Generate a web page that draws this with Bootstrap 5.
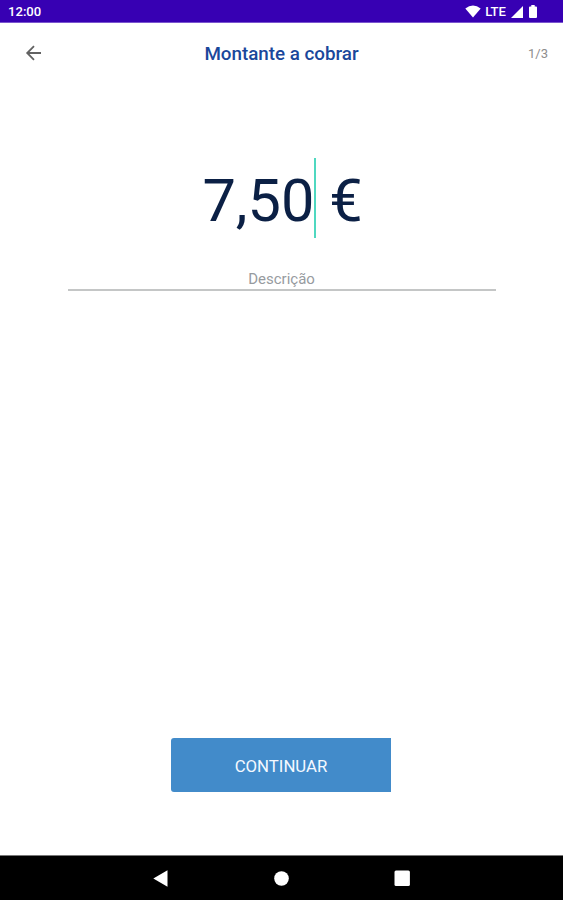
<!DOCTYPE html>
<html lang="pt">
<head>
<meta charset="utf-8">
<meta name="viewport" content="width=device-width, initial-scale=1">
<title>Montante a cobrar</title>
<link href="https://cdn.jsdelivr.net/npm/bootstrap@5.3.0/dist/css/bootstrap.min.css" rel="stylesheet">
<style>
body{font-family:Roboto,"Liberation Sans",sans-serif;height:900px;overflow:hidden}
svg{display:block}
.status{height:23px;background:#3700b3;padding:2px 26px 0 8px;font-size:13.1px;font-weight:500;border-bottom:1px solid #7a55cf}
.lte{margin:0 5px 0 4px}
.battery{margin-left:6px}
.topbar{height:62px;padding:0 15px 0 25px}
.side{width:50px}
.side svg{margin-top:-3px}
.title{font-size:18.8px;font-weight:500;color:#1a479b;line-height:24px}
.step{width:60px;font-size:13px;color:#8d8d8d}
.amount{margin-top:73px;height:80px;padding-left:2px;font-size:59.5px;line-height:86px;color:#0b2045;white-space:pre}
.caret{width:2px;height:80px;background:#4fd8c0;margin-right:-2px}
.desc{width:428px;height:30px;margin-top:23px;border-bottom:2px solid #c4c6c6;font-size:15px;line-height:36px;color:#979b9f}
.go{width:220px;height:54px;margin:auto 1px 63px 0;background:#428bca;border-radius:3px 0 0 3px;font-size:16.8px;line-height:24px;color:#f4f9ff;padding:1px 0 0}
.go:hover{background:#3a7fbb;color:#fff}
.sysnav{height:45px;background:#000;border-top:1px solid #777;padding-left:152px;gap:104px}
</style>
<script src="https://cdn.jsdelivr.net/npm/bootstrap@5.3.0/dist/js/bootstrap.bundle.min.js"></script>
</head>
<body class="d-flex flex-column bg-white">
<div class="status d-flex align-items-center justify-content-between text-white flex-shrink-0">
  <span>12:00</span>
  <div class="d-flex align-items-center">
    <svg width="16" height="13" viewBox="0 0 16 13" fill="#fff"><path d="M8 12.500.3 3.400Q8-2.400 15.700 3.400Z"/></svg>
    <span class="lte">LTE</span>
    <svg width="12" height="12" viewBox="0 0 12 12" fill="#fff"><path d="M12 0v12H0Z"/></svg>
    <svg class="battery" width="8" height="13" viewBox="0 0 8 13" fill="#fff"><path d="M2.300 0h3.400v1.500H7q1 0 1 1V12q0 1-1 1H1q-1 0-1-1V2.500q0-1 1-1h1.300Z"/></svg>
  </div>
</div>
<header class="topbar d-flex align-items-center justify-content-between flex-shrink-0">
  <a href="#" class="side" aria-label="Voltar"><svg width="18" height="18" viewBox="0 0 18 18" fill="none" stroke="#626262" stroke-width="1.8"><path d="M16 9H2.700M9 2.200 2.200 9 9 15.800"/></svg></a>
  <h1 class="title m-0">Montante a cobrar</h1>
  <span class="step text-end">1/3</span>
</header>
<main class="flex-grow-1 d-flex flex-column align-items-center">
  <div class="amount d-flex justify-content-center"><span>7,50</span><span class="caret"></span><span> €</span></div>
  <div class="desc text-center">Descrição</div>
  <button type="button" class="btn go border-0">CONTINUAR</button>
</main>
<nav class="sysnav d-flex align-items-center flex-shrink-0">
  <svg width="17" height="17" viewBox="0 0 17 17" fill="#fff"><path d="M15.500.300v16.400L1.300 8.500Z"/></svg>
  <svg width="17" height="17" viewBox="0 0 17 17" fill="#fff"><circle cx="8.500" cy="8.500" r="7.300"/></svg>
  <svg width="17" height="17" viewBox="0 0 17 17" fill="#fff"><rect x=".5" y=".5" width="15.400" height="15.400" rx="1.500"/></svg>
</nav>
</body>
</html>
